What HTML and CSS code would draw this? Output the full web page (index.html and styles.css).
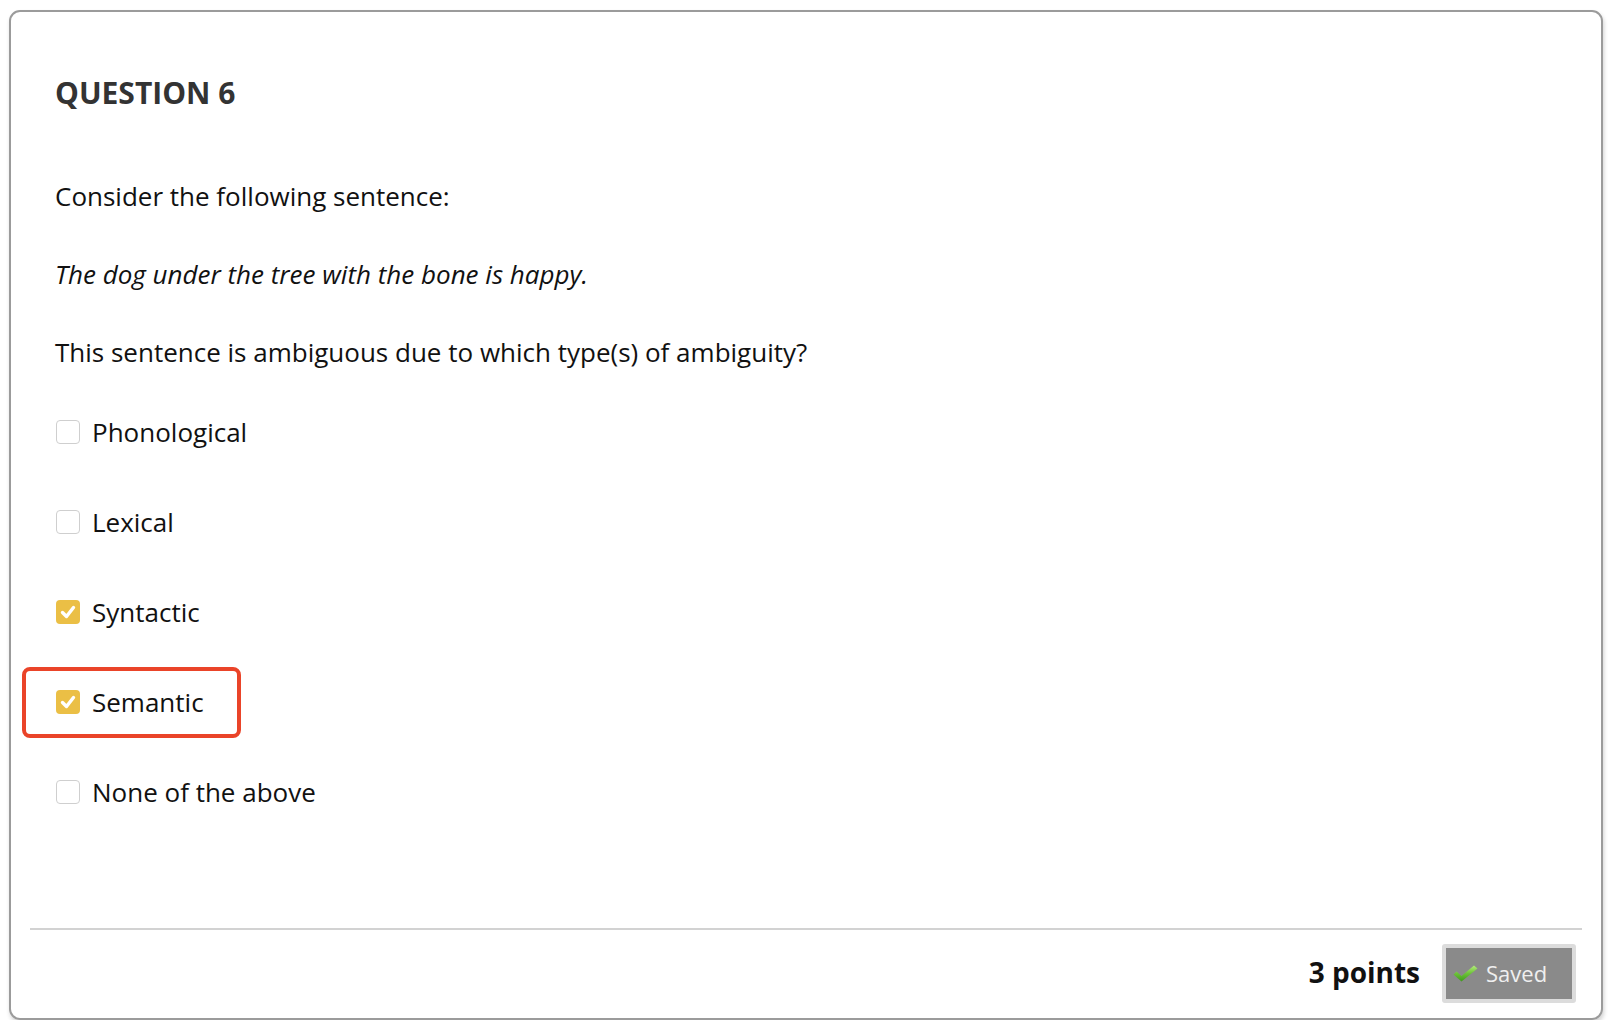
FILE: index.html
```html
<!DOCTYPE html>
<html lang="en">
<head>
<meta charset="utf-8">
<title>Question 6</title>
<link rel="stylesheet" href="styles.css">
</head>
<body>
<div class="card">
  <div class="content">
    <h2 class="title">QUESTION 6</h2>
    <p class="para first">Consider the following sentence:</p>
    <p class="para"><em>The dog under the tree with the bone is happy.</em></p>
    <p class="para">This sentence is ambiguous due to which type(s) of ambiguity?</p>
    <ul class="options">
      <li class="option"><span class="box"></span><span class="label">Phonological</span></li>
      <li class="option"><span class="box"></span><span class="label">Lexical</span></li>
      <li class="option"><span class="box checked"><svg viewBox="0 0 24 24" width="24" height="24"><path d="M6.5 12.5 L10.5 16.5 L17.5 7.5" fill="none" stroke="#fff" stroke-width="3.4" stroke-linecap="round" stroke-linejoin="round"/></svg></span><span class="label">Syntactic</span></li>
      <li class="option highlighted"><span class="box checked"><svg viewBox="0 0 24 24" width="24" height="24"><path d="M6.5 12.5 L10.5 16.5 L17.5 7.5" fill="none" stroke="#fff" stroke-width="3.4" stroke-linecap="round" stroke-linejoin="round"/></svg></span><span class="label">Semantic</span></li>
      <li class="option"><span class="box"></span><span class="label">None of the above</span></li>
    </ul>
  </div>
  <div class="footer">
    <span class="points">3 points</span>
    <span class="saved"><svg class="tick" viewBox="0 0 25 17" width="25" height="17"><defs><linearGradient id="g" x1="0" y1="0" x2="0" y2="1"><stop offset="0" stop-color="#b4ec7a"/><stop offset="0.5" stop-color="#6cc238"/><stop offset="1" stop-color="#3e9a1c"/></linearGradient></defs><path d="M0.5 9.5 L3.5 6.5 L8.5 11 L21 0.5 L24.5 3.5 L8.5 16.5 Z" fill="url(#g)"/></svg><span class="saved-text">Saved</span></span>
  </div>
</div>
</body>
</html>
```

FILE: styles.css
```css
html, body {
  margin: 0;
  padding: 0;
  background: #ffffff;
}

body {
  font-family: "Open Sans", "DejaVu Sans", sans-serif;
  color: #111;
}

.card {
  box-sizing: border-box;
  margin: 10px 19px 0 9px;
  height: 1010px;
  border: 2px solid #9b9b9b;
  border-radius: 11px;
  box-shadow: 1px 3px 4px rgba(0, 0, 0, 0.18);
  display: flex;
  flex-direction: column;
}

.content {
  flex: 1;
  padding: 61px 44px 0 44px;
}

.title {
  margin: 0;
  font-size: 30px;
  line-height: 40px;
  font-weight: 700;
  color: #333;
}

.para {
  margin: 42px 0 0 0;
  font-size: 26px;
  line-height: 36px;
}

.para.first {
  margin-top: 65px;
}

.para em {
  font-style: italic;
}

.options {
  list-style: none;
  margin: 44px 0 0 0;
  padding: 0;
  display: flex;
  flex-direction: column;
  gap: 54px;
}

.option {
  display: flex;
  align-items: center;
  height: 36px;
  font-size: 26px;
  position: relative;
}

.box {
  box-sizing: border-box;
  width: 24px;
  height: 24px;
  margin-left: 1px;
  border: 1px solid #cfcfcf;
  border-radius: 4px;
  background: #fff;
  flex: none;
  display: flex;
  align-items: center;
  justify-content: center;
}

.box.checked {
  border: none;
  background: #ebbf45;
}

.label {
  margin-left: 12px;
  line-height: 36px;
}

.highlighted::before {
  content: "";
  position: absolute;
  left: -33px;
  top: -17px;
  width: 219px;
  height: 71px;
  box-sizing: border-box;
  border: 4px solid #ea4429;
  border-radius: 8px;
}

.footer {
  margin: 0 19px 0 19px;
  border-top: 2px solid #d2d2d2;
  height: 90px;
  box-sizing: border-box;
  display: flex;
  align-items: center;
  justify-content: flex-end;
  padding-right: 6px;
  padding-bottom: 2px;
  gap: 22px;
}

.points {
  font-size: 28px;
  font-weight: 700;
  color: #111;
  line-height: 36px;
  margin-bottom: 3px;
}

.saved {
  box-sizing: border-box;
  width: 134px;
  height: 59px;
  border: 4px solid #dcdcdc;
  border-radius: 3px;
  background: #8a8a8a;
  display: flex;
  align-items: center;
  padding-left: 7px;
}

.tick {
  flex: none;
  margin-top: 1px;
}

.saved-text {
  margin-left: 8px;
  font-size: 22px;
  color: #efefef;
  line-height: 30px;
}
```
